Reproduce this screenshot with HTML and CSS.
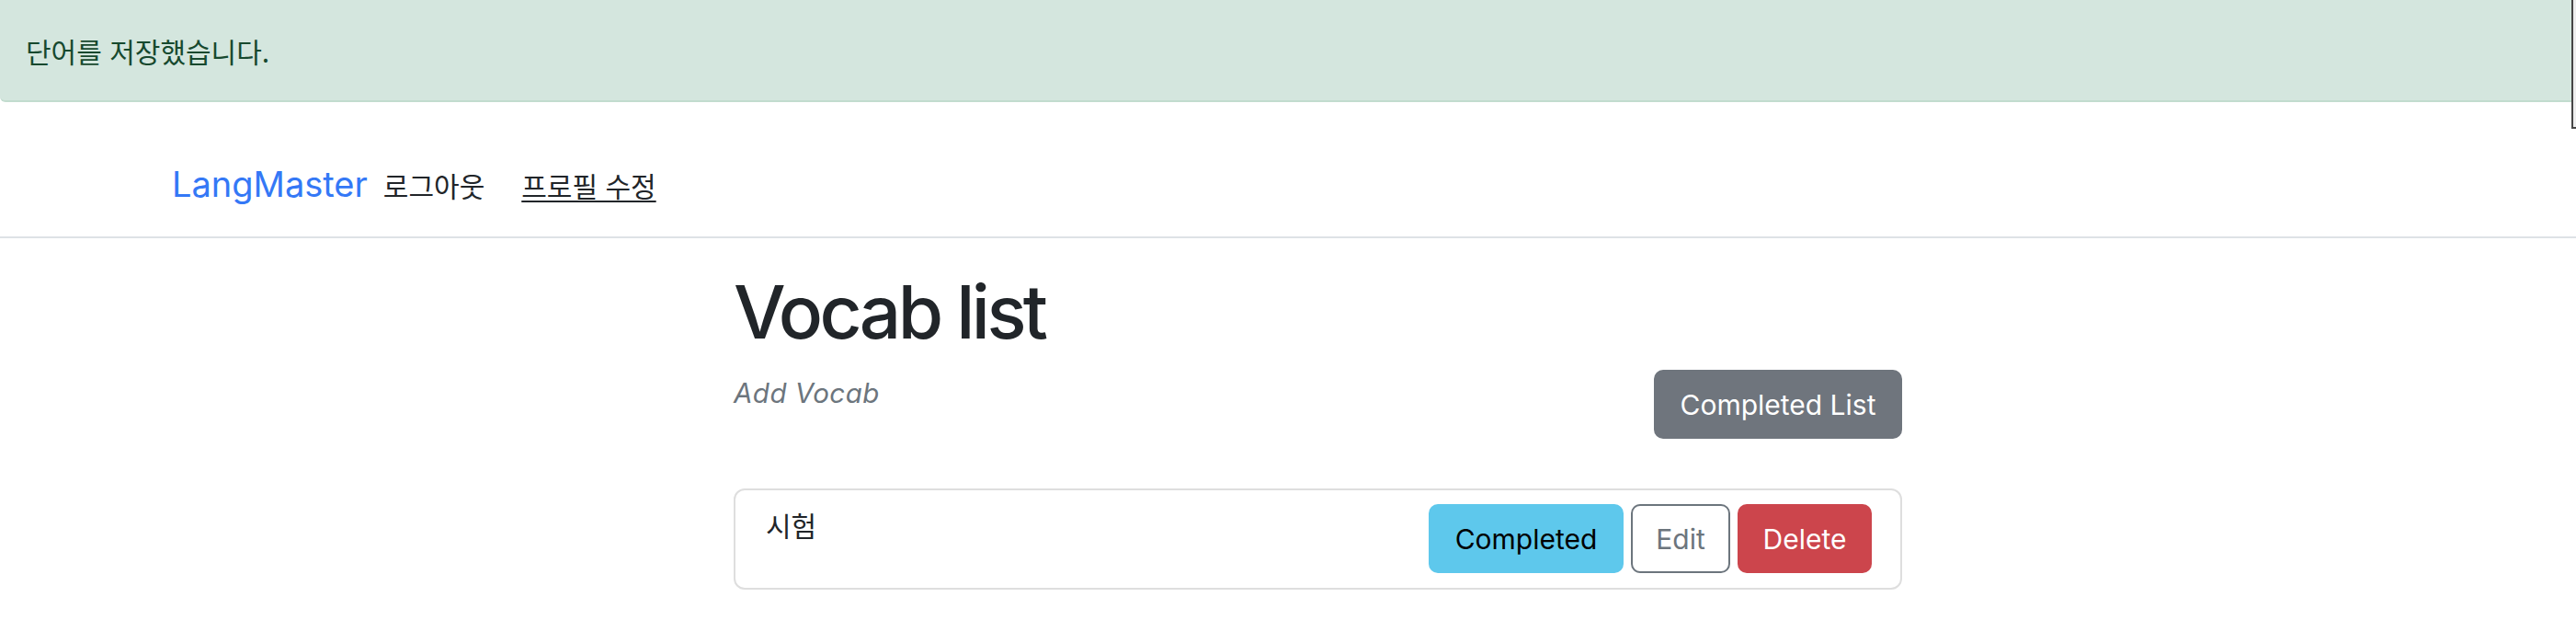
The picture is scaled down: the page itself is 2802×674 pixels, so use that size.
FILE: index.html
```html
<!DOCTYPE html>
<html lang="ko">
<head>
<meta charset="utf-8">
<title>LangMaster</title>
<link rel="stylesheet" href="styles.css">
</head>
<body>
<div class="alert">단어를 저장했습니다.</div>
<div class="edge-box"></div>
<nav class="navbar">
  <div class="nav-inner">
    <a class="brand" href="#">LangMaster</a>
    <a class="nav-link ko" href="#">로그아웃</a>
    <a class="nav-link ko underline" href="#">프로필 수정</a>
  </div>
</nav>
<main class="main">
  <h1 class="title">Vocab list</h1>
  <div class="toolbar">
    <p class="add-link">Add Vocab</p>
    <button class="btn btn-secondary btn-list">Completed List</button>
  </div>
  <div class="card">
    <span class="word ko">시험</span>
    <div class="actions">
      <button class="btn btn-info btn-done">Completed</button>
      <button class="btn btn-outline btn-edit">Edit</button>
      <button class="btn btn-danger btn-del">Delete</button>
    </div>
  </div>
</main>
</body>
</html>
```
FILE: styles.css
```css
html, body {
  margin: 0;
  padding: 0;
  background: #ffffff;
}
body {
  position: relative;
  font-family: "Inter", "Noto Sans CJK KR", sans-serif;
  color: #212529;
  overflow: hidden;
}
.ko {
  font-family: "Noto Sans CJK KR", sans-serif;
}
.alert {
  box-sizing: border-box;
  height: 111px;
  padding-left: 28px;
  display: flex;
  align-items: center;
  background: #d4e6de;
  border-bottom: 2px solid #c2dccf;
  border-bottom-left-radius: 6px;
  color: #17492e;
  font-family: "Noto Sans CJK KR", sans-serif;
  font-size: 30px;
}
.edge-box {
  position: absolute;
  top: -2px;
  left: 2797px;
  width: 12px;
  height: 142px;
  box-sizing: border-box;
  border: 2px solid #454545;
  background: #eeeeee;
}
.navbar {
  box-sizing: border-box;
  height: 148px;
  padding-top: 32px;
  border-bottom: 2px solid #dee2e6;
  display: flex;
  align-items: center;
}
.nav-inner {
  display: flex;
  align-items: baseline;
  padding-left: 187px;
}
.brand {
  font-size: 38px;
  color: #3478f6;
  text-decoration: none;
  margin-right: 17px;
}
.nav-link {
  font-size: 30px;
  color: #212529;
  text-decoration: none;
  margin-right: 40px;
}
.underline {
  text-decoration: underline;
  text-decoration-thickness: 2px;
  text-underline-offset: 4px;
}
.main {
  margin-left: 798px;
  width: 1271px;
}
.title {
  margin: 32px 0 15px 0;
  font-size: 80px;
  font-weight: 500;
  line-height: 96px;
  letter-spacing: -3.6px;
}
.toolbar {
  display: flex;
  justify-content: space-between;
  align-items: flex-start;
}
.add-link {
  margin: 7px 0 0 0;
  font-size: 29.5px;
  letter-spacing: 0.5px;
  font-style: italic;
  color: #6c757d;
}
.btn {
  box-sizing: border-box;
  height: 75px;
  border: 2px solid transparent;
  border-radius: 10px;
  font-family: "Inter", sans-serif;
  font-size: 30px;
  padding: 0;
  display: flex;
  align-items: center;
  justify-content: center;
}
.btn-secondary {
  background: #6f757d;
  color: #ffffff;
}
.btn-list {
  width: 270px;
}
.card {
  box-sizing: border-box;
  margin-top: 54px;
  height: 110px;
  border: 2px solid #dedede;
  border-radius: 12px;
  padding: 15px 31px 0 33px;
  display: flex;
  justify-content: space-between;
  align-items: flex-start;
}
.word {
  font-size: 30px;
  padding-top: 0;
}
.actions {
  display: flex;
  gap: 8px;
}
.btn-info {
  background: #5ec8ec;
  color: #000000;
}
.btn-done {
  width: 212px;
}
.btn-outline {
  background: #ffffff;
  border-color: #6c757d;
  color: #6c757d;
}
.btn-edit {
  width: 108px;
}
.btn-danger {
  background: #cc454c;
  color: #ffffff;
}
.btn-del {
  width: 146px;
}
```
